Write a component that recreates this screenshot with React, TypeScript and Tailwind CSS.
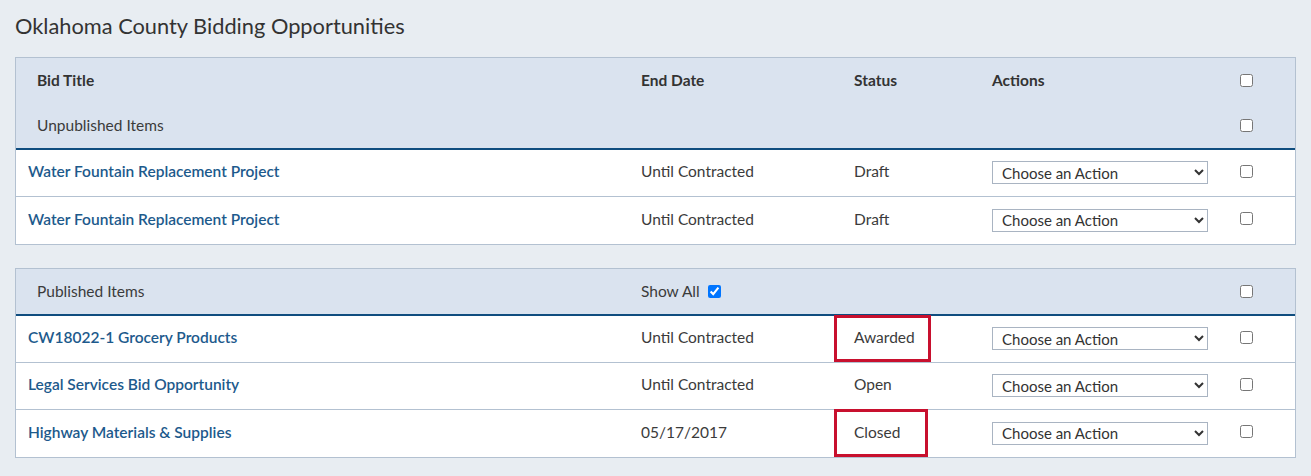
import React from 'react';

type Row = {
  title: string;
  endDate: string;
  status: string;
  flagged?: 'wide' | 'narrow';
};

const unpublished: Row[] = [
  { title: 'Water Fountain Replacement Project', endDate: 'Until Contracted', status: 'Draft' },
  { title: 'Water Fountain Replacement Project', endDate: 'Until Contracted', status: 'Draft' },
];

const published: Row[] = [
  { title: 'CW18022-1 Grocery Products', endDate: 'Until Contracted', status: 'Awarded', flagged: 'wide' },
  { title: 'Legal Services Bid Opportunity', endDate: 'Until Contracted', status: 'Open' },
  { title: 'Highway Materials & Supplies', endDate: '05/17/2017', status: 'Closed', flagged: 'narrow' },
];

const cols = 'grid grid-cols-[625px_213px_138px_248px_1fr] items-center';

const Box = () => (
  <input type="checkbox" className="h-[13px] w-[13px] m-0 align-middle" />
);

const BidRow = ({ row, last }: { row: Row; last: boolean }) => (
  <div className={`${cols} h-[47px] ${last ? '' : 'border-b border-[#b3c1d1]'}`}>
    <a href="#" className="pl-[12px] pb-[2px] font-semibold text-[#1d5a8c]">
      {row.title}
    </a>
    <div className="pb-[2px]">{row.endDate}</div>
    <div className="relative h-full flex items-center pb-[2px]">
      {row.flagged && (
        <div
          className={`absolute left-[-20px] top-[-1px] bottom-[0px] border-[3px] border-[#c8102e] ${
            row.flagged === 'wide' ? 'w-[97px]' : 'w-[94px]'
          }`}
        />
      )}
      <span>{row.status}</span>
    </div>
    <div>
      <select className="h-[23px] w-[216px] border border-[#a9b4c2] bg-white pl-[5px] text-[15px] text-[#333]">
        <option>Choose an Action</option>
      </select>
    </div>
    <div className="flex items-center pb-[4px]">
      <Box />
    </div>
  </div>
);

export default function App() {
  return (
    <div
      className="min-h-[476px] bg-[#e8edf2] px-[15px] pt-[11px] pb-[19px] text-[15.5px] text-[#3b3b3b]"
      style={{ fontFamily: 'Lato, "Noto Sans", sans-serif' }}
    >
      <h1 className="h-[30px] text-[21.8px] leading-[30px] text-[#333]">
        Oklahoma County Bidding Opportunities
      </h1>

      <div className="mt-[16px] border border-[#b3c1d1] bg-white">
        <div className="bg-[#dae3ef] border-b-2 border-[#0f4d7f]">
          <div className={`${cols} h-[45px] font-bold text-[#333]`}>
            <div className="pl-[21px]">Bid Title</div>
            <div>End Date</div>
            <div>Status</div>
            <div>Actions</div>
            <div className="flex items-center">
              <Box />
            </div>
          </div>
          <div className={`${cols} h-[45px]`}>
            <div className="pl-[21px]">Unpublished Items</div>
            <div />
            <div />
            <div />
            <div className="flex items-center">
              <Box />
            </div>
          </div>
        </div>
        {unpublished.map((row, i) => (
          <BidRow key={i} row={row} last={i === unpublished.length - 1} />
        ))}
      </div>

      <div className="mt-[23px] border border-[#b3c1d1] bg-white">
        <div className="bg-[#dae3ef] border-b-2 border-[#0f4d7f]">
          <div className={`${cols} h-[45px]`}>
            <div className="pl-[21px]">Published Items</div>
            <div className="flex items-center gap-[8px]">
              Show All
              <input type="checkbox" defaultChecked className="h-[13px] w-[13px] m-0" />
            </div>
            <div />
            <div />
            <div className="flex items-center">
              <Box />
            </div>
          </div>
        </div>
        {published.map((row, i) => (
          <BidRow key={i} row={row} last={i === published.length - 1} />
        ))}
      </div>
    </div>
  );
}
